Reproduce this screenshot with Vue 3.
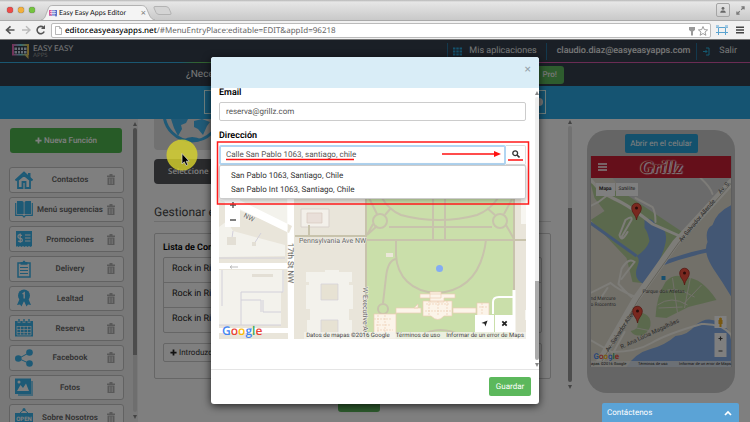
<script setup>
import { ref } from 'vue'

const email = ref('reserva@grillz.com')
const address = ref('Calle San Pablo 1063, santiago, chile')
const suggestions = ['San Pablo 1063, Santiago, Chile', 'San Pablo Int 1063, Santiago, Chile']
const features = [
  { name: 'Contactos', icon: 'home' },
  { name: 'Menú sugerencias', icon: 'book' },
  { name: 'Promociones', icon: 'promo' },
  { name: 'Delivery', icon: 'clip' },
  { name: 'Lealtad', icon: 'medal' },
  { name: 'Reserva', icon: 'calendar' },
  { name: 'Facebook', icon: 'share' },
  { name: 'Fotos', icon: 'photo' },
  { name: 'Sobre Nosotros', icon: 'open' }
]
const pins = [[46, 42], [94, 107], [47, 145]]
const concerts = ['Rock in Rio', 'Rock in Rio', 'Rock in Rio']
</script>

<template>
  <div class="window">
    <header class="chrome">
      <div class="tabs">
        <div class="lights"><i class="red"></i><i class="amber"></i><i class="green"></i></div>
        <div class="tab">
          <svg class="tab-shape" viewBox="0 0 116 15" preserveAspectRatio="none"><path d="M0 15C4 14 4 12 6 7C8 2 8 .5 12 .5H101C105 .5 106 2 108 7C110 12 111 14 115 15" fill="#f4f4f4" stroke="#999" stroke-width=".7" /></svg>
          <svg class="fav" viewBox="0 0 8 8"><path d="M0 1H8V6.500L7 8L6 6.500H0Z" fill="#5b6fc8" /><path d="M0 1H3V6.500H0Z" fill="#d8569a" /><path d="M1 2.500H7M1 4.500H7M3 1V6M5 1V6" stroke="#fff" stroke-width=".6" /></svg>
          <span class="tab-title">Easy Easy Apps Editor</span>
          <button class="tab-x" aria-label="Cerrar">×</button>
        </div>
        <svg class="newtab" viewBox="0 0 19 9"><path d="M2 .5H13Q15 .5 16 2.500L18 7Q18.500 8.500 17 8.500H6Q4 8.500 3 6.500L1 2Q.5 .5 2 .5Z" fill="#d4d4d4" stroke="#aaa" stroke-width=".8" /></svg>
        <span class="grow"></span>
        <button class="user" aria-label="Usuario"><svg viewBox="0 0 10 10"><circle cx="5" cy="3" r="1.800" fill="#666" /><path d="M1.500 8.500C1.500 6 3 5.500 5 5.500S8.500 6 8.500 8.500Z" fill="#666" /></svg></button>
        <svg class="expand" viewBox="0 0 10 10"><path d="M6 1H9V4M9 1L5.800 4.200M1 6V9H4M1 9L4.200 5.800" fill="none" stroke="#777" stroke-width="1.300" /></svg>
      </div>
      <div class="toolbar">
        <svg class="nav" viewBox="0 0 42 12"><path d="M9.500 6H2M5.500 2.300L1.500 6L5.500 9.700" fill="none" stroke="#555" stroke-width="1.600" /><path d="M17 6H24.500M21 2.300L25 6L21 9.700" fill="none" stroke="#bbb" stroke-width="1.400" /><path d="M38.500 3.500A3.700 3.700 0 1 0 39.200 7.500" fill="none" stroke="#555" stroke-width="1.600" /><path d="M40 1V5H36Z" fill="#555" /></svg>
        <div class="urlbar">
          <svg class="page" viewBox="0 0 7 9"><path d="M.5 .5H4.500L6.500 2.500V8.500H.5ZM4.500 .5V2.500H6.500" fill="#fff" stroke="#999" stroke-width=".7" /></svg>
          <span class="url"><b>editor.easyeasyapps.net</b>/#MenuEntryPlace:editable=EDIT&amp;appId=96218</span>
          <svg class="key" viewBox="0 0 20 12"><path d="M1 2H7V5L5 6.500V10L4 11L3 10V6.500L1 5Z" fill="#999" /><path d="M15 1.500L16.300 4.600L19.600 4.900L17 7L17.900 10.300L15 8.500L12.100 10.300L13 7L10.400 4.900L13.700 4.600Z" fill="#fff" stroke="#888" stroke-width=".8" /></svg>
        </div>
        <svg class="frame" viewBox="0 0 12 10"><path d="M2.500 0V10M9.500 0V10M0 2.500H12M0 7.500H12" stroke="#5ba4d0" stroke-width="1" /><path d="M0 0H3V2.500H0ZM9 0H12V2.500H9Z" fill="#a7cbe3" /></svg>
        <svg class="burger" viewBox="0 0 8 8"><path d="M0 1.200H8M0 4H8M0 6.800H8" stroke="#444" stroke-width="1.600" /></svg>
      </div>
    </header>

    <main class="stage">
      <div class="app">
        <div class="topbar">
          <div class="brand">
            <svg viewBox="0 0 17 16"><defs><linearGradient id="lg"><stop offset="0" stop-color="#f25bb0" /><stop offset=".5" stop-color="#6ad8e8" /><stop offset="1" stop-color="#f8c040" /></linearGradient></defs><path d="M0 1H17V12H16.500V16L13 12.500H0Z" fill="url(#lg)" /><path d="M2 3H15V11H2Z" fill="#343f4c" /><path d="M2.500 4.500H5V7H2.500ZM6 4.500H8V7H6ZM9 4.500H11V7H9ZM12 4.500H14.500V7H12ZM2.500 8H5V10.500H2.500ZM6 8H8V10.500H6ZM9 8H11V10.500H9ZM12 8H14.500V10.500H12Z" fill="#cde" /></svg>
            <div class="brand-text"><span>EASY EASY</span><small>APPS</small></div>
          </div>
          <a class="toplink first" href="#"><svg viewBox="0 0 9 9"><path d="M0 1.500H9M0 4.500H9M0 7.500H9" stroke="#28a5dc" stroke-width="2" stroke-dasharray="2.400 .9" /></svg>Mis aplicaciones</a>
          <a class="toplink mail" href="#">claudio.diaz@easyeasyapps.com</a>
          <a class="toplink last" href="#"><svg viewBox="0 0 9 9"><path d="M3 1H6V8H3M0 4.500H4M2.500 3L4 4.500L2.500 6" fill="none" stroke="#28b5e5" stroke-width="1" /></svg>Salir</a>
        </div>
        <div class="rainbow"></div>
        <div class="helpbar"><span>¿Necesitas</span><button>Pro!</button></div>
        <div class="bluebar"><div class="outline"><i></i></div></div>

        <div class="columns">
          <aside class="side">
            <div class="side-list">
              <button class="new"><svg viewBox="0 0 8 8"><path d="M4 .5V7.500M.5 4H7.500" stroke="#fff" stroke-width="2" /></svg>Nueva Función</button>
              <ul>
                <li v-for="f in features" :key="f.name">
                  <svg class="ficon" viewBox="0 0 18 18">
                    <g v-if="f.icon === 'home'"><path d="M3 9V17H7.500V11H10.500V17H15V9L9 4Z" fill="none" stroke="currentColor" stroke-width="1.800" /><path d="M.5 9.500L9 1.700L17.500 9.500" fill="none" stroke="currentColor" stroke-width="2.200" /><path d="M13 2H15.500V7L13 5Z" fill="currentColor" /></g>
                    <g v-else-if="f.icon === 'book'"><path d="M2 1H7Q8.700 1 8.700 2.500V14H2ZM9.500 2.500Q9.500 1 11 1H16V14H9.500Z" fill="currentColor" /><path d="M.7 3V15.300H7.500L9 17L10.500 15.300H17.300V3" fill="none" stroke="currentColor" stroke-width="1.200" /></g>
                    <g v-else-if="f.icon === 'promo'"><path d="M1 1H17V16L15.500 17L14 16L12.500 17L11 16L9.500 17L8 16L6.500 17L5 16L3.500 17L2 16L1 17Z" fill="currentColor" /><path d="M7 5.500Q3 4 3 6.200T5.200 8.300T7.300 10.500T3 11M5.200 3.500V12.700M10 5H15.500M10 8H15.500M10 11H15.500" fill="none" stroke="#fff" stroke-width="1.200" /></g>
                    <g v-else-if="f.icon === 'clip'"><path d="M3 3H15V17H3Z" fill="none" stroke="currentColor" stroke-width="1.500" /><path d="M5.500 2H7.500Q9 -1 10.500 2H12.500V4.800H5.500Z" fill="currentColor" /><path d="M5 7.500H13M5 10.500H13M5 13.500H13" stroke="currentColor" stroke-width="1.200" /></g>
                    <g v-else-if="f.icon === 'medal'"><path d="M5 9L2 16L5 15.500L6.500 17.500L9 12L11.500 17.500L13 15.500L16 16L13 9Z" fill="currentColor" /><circle cx="9" cy="6.500" r="6" fill="currentColor" /><path d="M7.500 5L9.200 3.800V9.500" fill="none" stroke="#fff" stroke-width="1.400" /></g>
                    <g v-else-if="f.icon === 'calendar'"><path d="M0 2H18V17.500H0Z" fill="currentColor" /><path d="M2 7.500H16M2 10.500H16M2 13.500H16M2 16H16M2 7V16M5.500 7V16M9 7V16M12.500 7V16M16 7V16" stroke="#fff" stroke-width=".7" /><path d="M4 0V4M9 0V4M14 0V4" stroke="#fff" stroke-width="2.600" /><path d="M4 0V3.500M9 0V3.500M14 0V3.500" stroke="currentColor" stroke-width="1.400" /></g>
                    <g v-else-if="f.icon === 'share'"><path d="M14.500 3.500L3.500 9.500L14.500 14.500" fill="none" stroke="currentColor" stroke-width="1" /><circle cx="14.500" cy="3.500" r="3.300" fill="currentColor" /><circle cx="3.300" cy="9.500" r="3.300" fill="currentColor" /><circle cx="14.500" cy="14.500" r="3.300" fill="currentColor" /></g>
                    <g v-else-if="f.icon === 'photo'"><path d="M3 3H18V18H3Z" fill="currentColor" opacity=".6" /><path d="M0 .5H16V16H0Z" fill="currentColor" /><path d="M2 13L5.500 7L8 10L11 5.500L14 13Z" fill="#fff" /><circle cx="4" cy="4" r="1.500" fill="#fff" /></g>
                    <g v-else><path d="M5 5L9 1.500L13 5" fill="none" stroke="currentColor" /><circle cx="9" cy="1.500" r="1.500" fill="currentColor" /><path d="M0 5H18V18H0Z" fill="currentColor" /><text x="9" y="12.500" text-anchor="middle" class="opentext">OPEN</text></g>
                  </svg>
                  <a href="#">{{ f.name }}</a>
                  <button class="trash" :aria-label="'Borrar ' + f.name"><svg viewBox="0 0 8 11"><path d="M0 1.500H8V3H0ZM2.500 0H5.500V1.500H2.500ZM.5 3.500H7.500V11H.5Z" fill="#b2b2b2" /><path d="M2.500 4.500V10M4 4.500V10M5.500 4.500V10" stroke="#eee" stroke-width=".7" /></svg></button>
                </li>
              </ul>
            </div>
            <div class="scroll left"><i></i></div>
          </aside>

          <section class="work">
            <div class="work-inner">
              <div class="globe"><svg viewBox="0 0 78 31"><circle cx="38" cy="-6" r="28" fill="#e6e6e6" stroke="#40b4ee" stroke-width="3" /><path d="M17 0H34L32 4L27 6L28 10L24 17L20 9ZM40 2L48 0L56 3L53 7L49 16L44 10L40 8ZM58 0H63L61 7L58 5ZM29 21Q38 15 48 21L42 23H33Z" fill="#40b4ee" /></svg></div>
              <button class="dark">Seleccione</button>
              <h2>Gestionar eventos</h2>
              <div class="panel">
                <h3>Lista de Conciertos</h3>
                <ul><li v-for="(c, i) in concerts" :key="i">{{ c }}</li></ul>
                <button class="add"><svg viewBox="0 0 8 8"><path d="M4 .5V7.500M.5 4H7.500" stroke="#222" stroke-width="2" /></svg>Introduzca</button>
              </div>
              <div class="under"><i></i></div>
            </div>
            <div class="scroll right"><i></i></div>
          </section>

          <section class="preview">
            <div class="phone">
              <button class="open-phone">Abrir en el celular</button>
              <div class="screen">
                <div class="phone-head">
                  <svg class="menu" viewBox="0 0 9 8"><path d="M0 1H9M0 4H9M0 7H9" stroke="#fff" stroke-width="1.500" /></svg>
                  <span class="logo">Grillz</span>
                </div>
                <div class="phone-map">
                  <svg class="canvas" viewBox="0 0 141 189" preserveAspectRatio="xMidYMid slice">
                    <rect width="141" height="189" fill="#e4e0d3" />
                    <path d="M22 0H141V5L90 57L46 30Z" fill="#d6d6d6" />
                    <path d="M0 5L35 16L92 54L60 106L42 104L36 80L0 42L14 33L4 20Z" fill="#b7d39b" />
                    <path d="M0 45L46 78" stroke="#86aee8" stroke-width="3" />
                    <path d="M54 42Q61 38 66 48Q78 50 75 65Q73 75 67 86Q62 102 53 106Q42 101 47 88Q50 81 46 78Q56 72 59 63Q57 53 54 50Z" fill="#86aee8" />
                    <path d="M68 87Q94 77 119 72" fill="none" stroke="#86aee8" stroke-width="4" />
                    <path d="M141 27Q126 34 122 47Q114 51 117 64Q112 74 123 91Q132 104 141 119Z" fill="#86aee8" />
                    <path d="M36 189Q45 175 60 171Q75 167 85 158Q98 157 105 147Q117 137 130 145Q139 149 141 165V189Z" fill="#86aee8" />
                    <path d="M75 104Q84 94 94 100Q110 98 126 122Q114 125 98 129L76 140L65 139Q66 118 75 104Z" fill="#b7d39b" />
                    <path d="M44 137Q53 132 59 140Q63 151 52 157Q44 159 40 153Q52 151 44 137Z" fill="#b7d39b" />
                    <g fill="none" stroke="#e4e0d3" stroke-width="1"><path d="M67 127Q81 117 97 127M72 114Q84 107 104 119M82 100L87 135M100 99L94 130M68 130L92 129M111 107L93 126M41 149L61 153" /></g>
                    <g fill="none" stroke="#faf8f0" stroke-linecap="round"><path d="M-1 0Q10 15 24 21T62 46L89 58" stroke-width="3" /><path d="M45 20L62 29Q65 34 65 44M110 0Q120 9 122 16M0 28L8 24L21 14M31 59L41 42Q42 37 35 42L29 57Q31 65 37 54M31 101L44 84Q38 79 31 91L28 106Q34 113 41 119M0 115L20 105Q28 112 45 119M7 125L17 110M15 189L34 154M0 162L21 174Q46 174 61 165T111 146Q131 145 141 157" stroke-width="2" /><path d="M141 4L85 65L66 92L46 120L9 184" stroke-width="7" /></g>
                    <path d="M141 5L88 65L49 120L11 184" fill="none" stroke="#c9c4b4" stroke-width="1" />
                    <g class="roadtext"><text transform="translate(91 64) rotate(-50)">Av Salvador Allende</text><text transform="translate(130 16) rotate(-47)">Av. S.</text><text transform="translate(18 174) rotate(-56)">Av. Salvador Allende</text><text transform="translate(31 171) rotate(-25)">R. Ana Lúcia Magalhães</text></g>
                    <g class="poi"><text x="52" y="115">Parque dos Atletas</text><text x="0" y="122">nd Mercure</text><text x="0" y="128">o Riocentro</text></g>
                    <rect x="71" y="98" width="4" height="4" fill="#2f9fdd" />
                    <g v-for="(p, i) in pins" :key="i" :transform="`translate(${p[0]} ${p[1]})`"><path d="M0 0C-1 -6 -4.800 -7 -4.800 -12A4.800 4.800 0 0 1 4.800 -12C4.800 -7 1 -6 0 0Z" fill="#f3503f" stroke="#a22a20" stroke-width=".7" /><circle cy="-12" r="1.500" fill="#561914" /></g>
                    <rect x="124" y="138" width="12" height="12" fill="#fff" /><path d="M128 142H132V146H131V149H129V146H128Z" fill="#f2b01e" /><circle cx="130" cy="141" r="1.500" fill="#f2b01e" />
                    <rect x="124" y="155" width="12" height="24" fill="#fff" /><path d="M128 160.500H132M130 158.500V162.500M128 173H132" stroke="#444" stroke-width="1.200" />
                    <g class="g-small"><text x="3" y="181"><tspan fill="#4285f4">G</tspan><tspan fill="#ea4335">o</tspan><tspan fill="#fbbc05">o</tspan><tspan fill="#4285f4">g</tspan><tspan fill="#34a853">l</tspan><tspan fill="#ea4335">e</tspan></text></g>
                  </svg>
                  <div class="maptype"><button><b>Mapa</b></button><button>Satélite</button></div>
                  <div class="phone-credits"><span>apas ©2016 Google</span><span>Términos de uso</span><span>Informar de un error de Maps</span></div>
                </div>
              </div>
            </div>
          </section>
        </div>
      </div>

      <div class="backdrop">
        <div class="modal" role="dialog" aria-label="Editar lugar">
          <div class="modal-head"><button aria-label="Cerrar">×</button></div>
          <div class="modal-body">
            <form class="fields" @submit.prevent>
              <label for="email">Email</label>
              <input id="email" v-model="email" type="text">
              <label for="address">Dirección</label>
              <div class="lookup">
                <div class="row">
                  <input id="address" v-model="address" type="text" spellcheck="false">
                  <button class="find" aria-label="Buscar"><svg viewBox="0 0 8 8"><circle cx="3.200" cy="3.200" r="2.400" fill="none" stroke="#333" stroke-width="1.300" /><path d="M5 5L7.500 7.500" stroke="#333" stroke-width="1.600" /></svg></button>
                </div>
                <div class="map">
                  <svg class="canvas" viewBox="0 0 307 174" preserveAspectRatio="xMidYMid slice">
                    <rect width="307" height="174" fill="#e9e5da" />
                    <path d="M0 0H69V65L0 37ZM0 62L8 56L14 66L66 80V91L0 92ZM0 105H65V127H62V160H0Z" fill="#f3f2ec" />
                    <g fill="none" stroke="#d2d0da" stroke-width="1"><path d="M0 93H66M22 127H64V105M22 127V160M0 160H62M3 105V141M22 135H42V147M44 135V147H62M14 66L12 80M42 68L35 79" /></g>
                    <path d="M33 109H54V112H33ZM8 72H17V80H8ZM33 77H37V81H33Z" fill="#e3dfd5" />
                    <path d="M0 34L70 68L73 61L0 25ZM68 0H75V174H69ZM0 98H69V104H0ZM0 163H69V168H0Z" fill="#fff" />
                    <path d="M82 44H110V62H82Z" fill="#f3f0ea" stroke="#d9d2cc" /><path d="M88 48H103V58H88Z" fill="#e9dfd9" stroke="#d8c8be" stroke-width=".7" />
                    <path d="M87 107H106V105H120V107H133V117H130V120H134V144H130V155H133V174H88V155H91V144H87V120H90V117H87Z" fill="#f3f2ec" /><path d="M102 119H119V135H102ZM102 155H119V174H102Z" fill="#e7e2d3" stroke="#d2d0da" stroke-width=".7" />
                    <path d="M148 0H295V174H148Z" fill="#cadfaa" />
                    <g fill="none" stroke="#c8c3ac" stroke-width="2">
                      <path d="M76 71H148M148 75H307M214 0V75M226 0V75M147 0V174M295 0V174M90 60V72" />
                      <path d="M163 33Q170 45 182 50Q200 55 220 55T258 50Q271 45 279 33M170 62H273M150 33L158 49M166 50L172 43M276 50L268 43M285 49L293 34M154 59L148 70M287 60L295 74M148 70L158 61" />
                      <circle cx="161" cy="56" r="7" /><circle cx="281" cy="56" r="7" />
                      <path d="M177 75V90C178 111 192 127 218 128C247 126 263 108 267 75" />
                      <path d="M178 94Q169 94 167 112L164 138M202 171Q220 159 244 171" /><circle cx="164" cy="144" r="5" />
                    </g>
                    <path d="M274 149V137Q274 132 280 132H295" fill="none" stroke="#fff" stroke-width="2" /><path d="M295 125V174" stroke="#fff" stroke-width="3" /><path d="M302 32H307V59H302ZM306 145H307V155H306Z" fill="#f7f6f1" /><path d="M167 88H174V92H167Z" fill="#ebe7d8" />
                    <g fill="#fcf4e9" stroke="#eccdb4" stroke-width=".7"><path d="M155 149H177V143H202V148H177V174H155ZM201 129H236V133H225V137H211V133H201ZM211 127H222V133H211ZM204 136H233V151H225Q219 158 212 151H204ZM195 143L199 139V143ZM234 143H257V148H234ZM258 138H270V152H258Z" /><path d="M155 154H173M157 160H171M158 165H174M159 150V174M166 150V174M207 139H231M206 146H232M210 136V151M219 136V151M228 136V151M260 142H269M263 138V151" stroke-dasharray="2 1" /></g>
                    <circle cx="220.500" cy="103.500" r="3.500" fill="#84acf2" />
                    <g class="streets"><text x="80" y="78">Pennsylvania Ave NW</text><text transform="translate(69 78) rotate(90)" class="big">17th St NW</text><text transform="translate(144 122) rotate(90)">W Executive Ave</text><text transform="translate(24 52) rotate(27)">NW</text></g>
                    <path d="M11 102H19M11 102L13 100.500M11 102L13 103.500" stroke="#bbb" fill="none" />
                    <g class="google"><text x="3" y="170"><tspan fill="#4285f4">G</tspan><tspan fill="#ea4335">o</tspan><tspan fill="#fbbc05">o</tspan><tspan fill="#4285f4">g</tspan><tspan fill="#34a853">l</tspan><tspan fill="#ea4335">e</tspan></text></g>
                  </svg>
                  <div class="zoomer"><button aria-label="Acercar"><svg viewBox="0 0 6 6"><path d="M3 0V6M0 3H6" stroke="#555" stroke-width="1.400" /></svg></button><button aria-label="Alejar"><svg viewBox="0 0 6 6"><path d="M0 3H6" stroke="#555" stroke-width="1.400" /></svg></button></div>
                  <div class="tools"><button aria-label="Mi ubicación"><svg viewBox="0 0 8 8"><path d="M7.500 .5L5 7.500L4 4.200L.5 3.500Z" fill="#222" /></svg></button><button aria-label="Quitar"><svg viewBox="0 0 8 8"><path d="M1.500 1.500L6.500 6.500M6.500 1.500L1.500 6.500" stroke="#222" stroke-width="2" /></svg></button></div>
                  <div class="credits"><span>Datos de mapas ©2016 Google</span><span>Términos de uso</span><span>Informar de un error de Maps</span></div>
                </div>
                <ul class="suggest"><li v-for="s in suggestions" :key="s">{{ s }}</li></ul>
                <svg class="marks" viewBox="0 0 314 64" preserveAspectRatio="none"><rect x="1.500" y="1" width="311" height="62" fill="none" stroke="#ff1b1b" stroke-width="1.500" /><path d="M10 18.500H138M292 19H307" stroke="#ff1010" stroke-width="1.500" /><path d="M226 13H280" stroke="#f11" stroke-width="1.500" /><path d="M278 10L285 13L278 16Z" fill="#f11" /></svg>
              </div>
            </form>
            <div class="scroll inner"><i></i></div>
          </div>
          <div class="modal-foot"><button>Guardar</button></div>
        </div>
      </div>

      <svg class="pointer" viewBox="0 0 32 32"><circle cx="16" cy="16" r="15.500" fill="#d6d12c" opacity=".82" /><path d="M16 14.500V25L18.300 22.800L20 26.500L21.800 25.700L20.200 22.200H23.200Z" fill="#000" stroke="#ddd" stroke-width=".7" /></svg>
      <button class="chat">Contáctenos<svg viewBox="0 0 8 6"><path d="M1 5L4 2L7 5" fill="none" stroke="#fff" stroke-width="1.700" /></svg></button>
    </main>
  </div>
</template>

<style>
body { overflow: hidden; }
</style>

<style scoped>
* { box-sizing: border-box; }
.window { height: 100vh; display: flex; flex-direction: column; font-family: Roboto, "Liberation Sans", sans-serif; font-size: 8px; color: #333; text-rendering: geometricPrecision; }
button, input { font: inherit; color: inherit; margin: 0; padding: 0; border: 0; background: none; display: block; text-rendering: inherit; }
svg { display: block; flex: none; }
ul { list-style: none; margin: 0; padding: 0; }
h2, h3 { margin: 0; }
a { color: inherit; text-decoration: none; }

.chrome { flex: none; height: 40px; background: #f1f1f1; border-bottom: 1px solid #777; font-family: "Noto Sans", sans-serif; }
.tabs { height: 21px; padding: 0 5px 0 7px; background: linear-gradient(#b5b5b5 0, #e6e6e6 2px, #c9c9c9); border-bottom: 1px solid #aaa; display: flex; align-items: center; }
.lights { display: flex; gap: 5px; width: 34px; }
.lights i { width: 6px; height: 6px; border-radius: 50%; box-shadow: 0 0 1px #333; }
.red { background: #ee4b49; } .amber { background: #f3b03c; } .green { background: #74c43f; }
.tab { position: relative; width: 115px; height: 15px; display: flex; align-items: center; padding: 0 10px 0 8px; align-self: flex-end; }
.tab > * { position: relative; }
.tab .tab-shape { position: absolute; left: 0; top: 0; width: 100%; height: 100%; }
.fav { width: 8px; height: 8px; margin-right: 2px; }
.tab-title { font-family: Lato, sans-serif; font-size: 7px; line-height: 12px; color: #111; flex: 1; white-space: nowrap; }
.tab-x { font-size: 9px; line-height: 10px; color: #777; }
.newtab { width: 19px; height: 9px; margin-left: -3px; }
.grow { flex: 1; }
.user { width: 14px; height: 14px; border: 1px solid #a5a5a5; border-radius: 2px; padding: 2px; margin-right: 6px; }
.user svg { width: 8px; height: 8px; }
.expand { width: 9px; height: 9px; }
.toolbar { height: 18px; display: flex; align-items: center; padding: 0 6px 0 5px; }
.nav { width: 42px; height: 12px; }
.urlbar { flex: 1; height: 15px; margin: 1px 5px 0 4px; padding: 0 2px 0 3px; background: #fff; border: 1px solid #bbb; border-radius: 2px; display: flex; align-items: center; }
.page { width: 7px; height: 9px; margin-right: 3px; }
.url { flex: 1; font-size: 8px; line-height: 12px; color: #666; white-space: nowrap; }
.url b { font-weight: 500; color: #000; }
.key { width: 20px; height: 12px; }
.frame { width: 12px; height: 10px; margin-right: 8px; }
.burger { width: 8px; height: 8px; }

.stage { position: relative; flex: 1; min-height: 0; overflow: hidden; }
.app { height: 100%; display: flex; flex-direction: column; background: #fff; }
.topbar { flex: none; height: 22px; background: #343f4c; display: flex; align-items: center; padding-left: 12px; color: #eee; font-size: 9px; }
.brand { flex: 1; display: flex; gap: 4px; }
.brand svg { width: 17px; height: 16px; }
.brand-text { display: flex; flex-direction: column; padding-top: 1px; font-family: Lato, sans-serif; font-size: 8px; line-height: 9px; }
.brand-text small { font-size: 6px; line-height: 6px; color: #999; }
.toplink { height: 17px; display: flex; align-items: center; border-left: 1px solid #26739c; white-space: nowrap; }
.toplink svg { width: 9px; height: 9px; }
.first { padding: 0 9px 0 5px; gap: 7px; }
.mail { padding: 0 6px 0 10px; font-weight: 500; }
.last { padding: 0 13px 0 6px; gap: 7px; }
.rainbow { flex: none; height: 1px; background: linear-gradient(90deg, #35aee2 24%, #62c462 26%, #62c462 50%, #d658a8 72%, #d658a8); }
.helpbar { flex: none; height: 23px; background: #343f4c; display: flex; align-items: center; justify-content: space-between; padding: 0 186px 0 186px; color: #eee; font-size: 10px; }
.helpbar button { width: 50px; height: 18px; padding-right: 7px; border-radius: 3px; background: #5cb85c; font-size: 8px; font-weight: 500; text-align: right; }
.bluebar { flex: none; height: 33px; padding: 4px 204px 5px; background: #2ba8e4; }
.outline { height: 100%; border: 1px solid #dff; display: flex; align-items: center; justify-content: flex-end; padding-right: 2px; }
.outline i { width: 8px; height: 8px; border-radius: 50%; background: #eee; }

.columns { flex: 1; min-height: 0; display: flex; }
.side { width: 138px; display: flex; background: #f0f0f0; overflow: hidden; }
.side-list { flex: 1; padding: 9px 8px 0 9px; }
.new { display: flex; align-items: center; justify-content: center; gap: 2px; width: 112px; height: 25px; margin: 0 0 14px 1px; background: #4fb64f; border-radius: 3px; color: #fff; font-weight: 500; }
.new svg { width: 7px; height: 7px; }
.side ul { height: 263px; display: grid; grid-auto-rows: 1fr; gap: 4px; }
.side li { display: flex; align-items: center; padding: 0 8px 0 5px; border: 1px solid #c4c4c4; border-radius: 3px; background: #fff; color: #666; font-weight: 600; }
.side li a { flex: 1; text-align: center; white-space: nowrap; }
.ficon { width: 18px; height: 18px; color: #3ab4ec; }
.opentext { font-size: 6px; font-weight: 700; fill: #fff; }
.trash svg { width: 8px; height: 11px; }
.scroll { display: flex; flex-direction: column; align-items: center; width: 5px; }
.scroll::before, .scroll::after { content: ""; border: 2px solid transparent; }
.scroll::before { border-bottom: 4px solid #888; border-top: 0; margin-bottom: 2px; }
.scroll::after { border-top: 4px solid #888; border-bottom: 0; margin-top: 3px; }
.scroll i { flex: 1; width: 4px; border-radius: 2px; }
.scroll.left { margin: 3px 1px 3px 0; }
.scroll.left i { background: linear-gradient(#999 80%, #ddd 80%); }
.scroll.right { margin: 1px 0 33px; }
.scroll.right i { background: linear-gradient(#e2e2e2 32%, #999 32%); }
.work { flex: 1; display: flex; }
.work-inner { flex: 1; padding: 0 16px; display: flex; flex-direction: column; }
.globe { width: 78px; height: 31px; background: #e2e2e2; border-radius: 0 0 4px 4px; }
.globe svg { width: 78px; height: 31px; }
.dark { width: 120px; height: 25px; margin-top: 9px; padding-left: 14px; border-radius: 4px; background: #54565a; color: #fff; font-family: "Open Sans", sans-serif; font-size: 8px; font-weight: 600; text-align: left; }
.work h2 { margin-top: 20px; padding-bottom: 1px; border-bottom: 1px solid #ddd; font-size: 12px; line-height: 16px; font-weight: 400; color: #444; }
.panel { margin-top: 11px; padding: 8px 8px 16px; border: 1px solid #ccc; border-radius: 2px; }
.panel h3 { font-size: 9px; line-height: 12px; color: #000; font-weight: 600; }
.panel ul { margin: 3px 0 10px; border: 1px solid #ccc; border-radius: 2px; }
.panel li { height: 24px; line-height: 23px; padding-left: 8px; font-size: 9px; color: #222; }
.panel li + li { height: 25px; border-top: 1px solid #ccc; }
.panel .add { display: flex; align-items: center; gap: 2px; width: 100%; height: 19px; padding-left: 6px; border: 1px solid #ccc; border-radius: 2px; }
.add svg { width: 7px; height: 7px; }
.under { display: flex; justify-content: center; }
.under i { width: 42px; height: 22px; margin: 11px 0 0 12px; border-radius: 3px; background: #5cb85c; }
.preview { width: 178px; padding: 11px 15px 28px; display: flex; }
.phone { flex: 1; height: 263px; border-radius: 20px; background: #cbcbcb; padding: 4px 3px 0; display: flex; flex-direction: column; align-items: center; }
.open-phone { width: 73px; height: 19px; margin-bottom: 3px; border-radius: 2px; background: #27a3da; color: #fff; }
.screen { width: 100%; border: 1px solid #bbb; border-width: 0 1px; }
.phone-head { height: 22px; background: #cb1f34; display: flex; align-items: center; padding: 0 7px; }
.menu { width: 9px; height: 8px; }
.logo { flex: 1; text-align: center; padding-right: 8px; font-family: "Liberation Serif", serif; font-style: italic; font-weight: 700; font-size: 18px; line-height: 20px; color: #cb1f34; text-shadow: 0 0 1px #fff, 1px 1px 1px #fff, -1px 0 1px #fff; }
.phone-map { position: relative; height: 189px; }
.canvas { width: 100%; height: 100%; }
.roadtext { font-size: 6px; fill: #555; }
.poi { font-size: 5px; fill: #555; }
.maptype { position: absolute; left: 5px; top: 5px; height: 13px; display: flex; gap: 1px; }
.maptype button { height: 13px; padding: 0 3px; background: #fff; font-size: 5px; line-height: 13px; }
.phone-credits { position: absolute; left: 0; right: 0; bottom: 0; height: 6px; display: flex; justify-content: space-between; background: #eeeeeacc; font-size: 4px; line-height: 6px; color: #222; white-space: nowrap; }
.g-small { font-size: 8px; font-weight: 500; }

.backdrop { position: absolute; inset: 0; background: rgba(0, 0, 0, .5); display: flex; justify-content: center; align-items: flex-start; padding-top: 17px; }
.modal { width: 328px; background: #fff; border-radius: 3px; overflow: hidden; box-shadow: 0 2px 8px rgba(0, 0, 0, .7); }
.modal-head { height: 31px; padding: 6px 8px; background: #d9edf7; display: flex; justify-content: flex-end; }
.modal-head button { height: 12px; font-size: 12px; line-height: 12px; color: #98a6ad; }
.modal-body { display: flex; height: 281px; }
.fields { flex: 1; min-width: 0; padding: 0 8px; }
.fields label { display: block; font-size: 9px; line-height: 12px; font-weight: 600; color: #000; margin-bottom: 3px; margin-top: -1px; }
.fields input { width: 100%; height: 19px; padding: 0 6px; border: 1px solid #ccc; border-radius: 2px; color: #555; }
.fields #email { margin-bottom: 9px; }
.fields input + label { margin-top: 0; }
.lookup { position: relative; }
.row { display: flex; }
.row input { border: 2px solid #b2d6f2; padding: 0 5px 2px; height: 20px; outline: 0; }
.find { flex: none; width: 20px; height: 20px; border: 1px solid #ddd; border-left: 0; border-radius: 0 2px 2px 0; padding: 3px 6px 5px; }
.find svg { width: 8px; height: 8px; }
.map { position: relative; height: 174px; }
.streets { font-size: 7px; fill: #666; paint-order: stroke; stroke: #f3f1ea; stroke-width: 1px; }
.big { font-size: 8px; }
.google { font-family: "Open Sans", sans-serif; font-size: 12px; font-weight: 600; }
.zoomer { position: absolute; left: 6px; top: 32px; display: flex; flex-direction: column; background: #fff; }
.zoomer button { width: 15px; height: 15px; padding: 5px; }
.zoomer svg { width: 6px; height: 6px; }
.tools { position: absolute; right: 12px; bottom: 7px; display: flex; gap: 1px; }
.tools button { width: 19px; height: 17px; padding: 5px 6px; background: #fff; }
.tools svg { width: 7px; height: 7px; }
.credits { position: absolute; right: 0; bottom: 0; height: 7px; display: flex; gap: 6px; padding: 0 2px; background: #f3f2eccc; font-size: 6px; line-height: 7px; color: #444; white-space: nowrap; }
.suggest { position: absolute; left: 0; right: 0; top: 20px; height: 34px; padding: 3px 11px; background: #fff; border: 1px solid #ccc; border-radius: 2px; box-shadow: 0 2px 5px rgba(0, 0, 0, .25); }
.suggest li { line-height: 14px; }
.marks { position: absolute; left: -3px; top: -4px; width: calc(100% + 7px); height: 64px; }
.scroll.inner { margin: 3px 0 2px; }
.scroll.inner i { background: linear-gradient(#eee 70%, #aaa 70%); }
.modal-foot { height: 35px; border-top: 1px solid #e5e5e5; display: flex; justify-content: flex-end; padding: 7px 8px 0; }
.modal-foot button { width: 42px; height: 19px; background: #5cb85c; border-radius: 2px; color: #fff; }

.pointer { position: absolute; left: 166px; top: 99px; width: 32px; height: 32px; }
.chat { position: absolute; right: 11px; bottom: 0; width: 137px; height: 19px; padding: 0 7px 0 5px; background: #5ba3d6; color: #fff; border-radius: 2px 2px 0 0; display: flex; align-items: center; justify-content: space-between; }
.chat svg { width: 8px; height: 6px; }
</style>
